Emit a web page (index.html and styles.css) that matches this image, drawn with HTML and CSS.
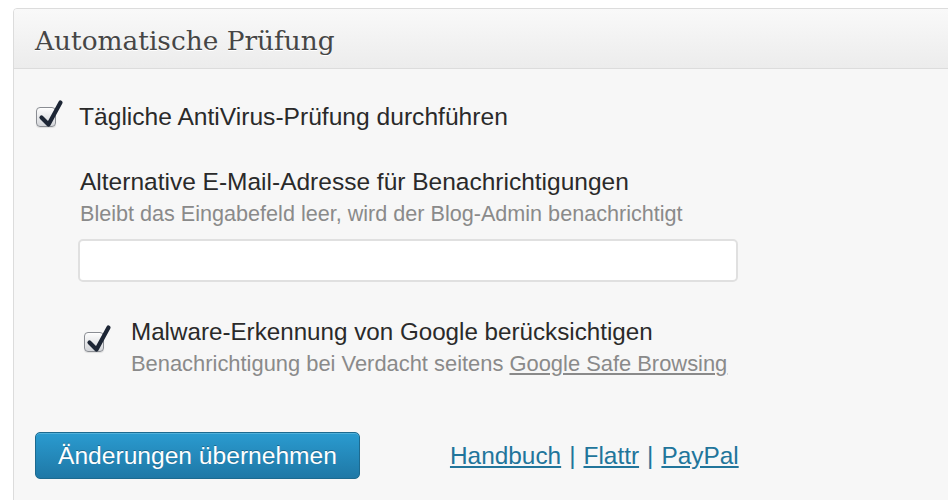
FILE: index.html
```html
<!DOCTYPE html>
<html lang="de">
<head>
<meta charset="utf-8">
<title>Automatische Prüfung</title>
<link rel="stylesheet" href="styles.css">
</head>
<body>
<div class="postbox">
  <h3 class="hndle">Automatische Prüfung</h3>
  <div class="inside">
    <label class="check-row">
      <span class="cbox"><svg viewBox="0 0 28 30" width="28" height="30"><path d="M4.5 18.5 L11.5 25.5 L23.5 3.5" fill="none" stroke="#1d2635" stroke-width="4.2" stroke-linecap="round" stroke-linejoin="round"/></svg></span>
      <span class="check-title">Tägliche AntiVirus-Prüfung durchführen</span>
    </label>

    <div class="sub">
      <div class="field-label">Alternative E-Mail-Adresse für Benachrichtigungen</div>
      <div class="hint">Bleibt das Eingabefeld leer, wird der Blog-Admin benachrichtigt</div>
      <input class="text-input" type="text">

      <label class="check-row nested">
        <span class="cbox"><svg viewBox="0 0 28 30" width="28" height="30"><path d="M4.5 18.5 L11.5 25.5 L23.5 3.5" fill="none" stroke="#1d2635" stroke-width="4.2" stroke-linecap="round" stroke-linejoin="round"/></svg></span>
        <span class="check-text">
          <span class="check-title">Malware-Erkennung von Google berücksichtigen</span>
          <span class="hint">Benachrichtigung bei Verdacht seitens <a href="#" class="hint-link">Google Safe Browsing</a></span>
        </span>
      </label>
    </div>

    <div class="actions">
      <button class="button-primary" type="button">Änderungen übernehmen</button>
      <div class="links">
        <a href="#">Handbuch</a><span class="sep">|</span><a href="#">Flattr</a><span class="sep">|</span><a href="#">PayPal</a>
      </div>
    </div>
  </div>
</div>
</body>
</html>
```

FILE: styles.css
```css
html, body {
  margin: 0;
  padding: 0;
  background: #ffffff;
  overflow: hidden;
}

body {
  font-family: "Liberation Sans", Arial, sans-serif;
  color: #333333;
}

.postbox {
  margin: 8px -12px 0 13px;
  border: 1px solid #dcdcdc;
  border-radius: 4px 4px 0 0;
  background: #f7f7f7;
  height: 600px;
}

.hndle {
  margin: 0;
  height: 60px;
  box-sizing: border-box;
  padding: 17px 0 0 21px;
  font-family: "DejaVu Serif", Georgia, serif;
  font-weight: normal;
  font-size: 26.4px;
  line-height: 30px;
  color: #464646;
  text-shadow: 0 1px 0 #ffffff;
  background: linear-gradient(to bottom, #f9f9f9, #ececec);
  border-bottom: 1px solid #dcdcdc;
  box-shadow: 0 1px 0 #ffffff;
  border-radius: 3px 3px 0 0;
}

.inside {
  padding: 34px 0 0 22px;
  background: #f7f7f7;
}

.check-row {
  display: flex;
  align-items: flex-start;
}

.cbox {
  position: relative;
  flex: none;
  width: 18px;
  height: 18px;
  margin: 4px 23px 0 0;
  border: 1px solid #8a8d93;
  border-radius: 4px;
  background: linear-gradient(to bottom, #fdfdfd, #d3d5d9);
  box-shadow: inset 0 1px 1px rgba(255,255,255,0.8), 0 1px 1px rgba(0,0,0,0.1);
}

.cbox svg {
  position: absolute;
  left: 0;
  top: -9px;
  overflow: visible;
}

.check-title {
  font-size: 24.6px;
  line-height: 28px;
  color: #2a2a2a;
}

.sub {
  margin-left: 44px;
  margin-top: 37px;
}

.field-label {
  font-size: 24.5px;
  line-height: 28px;
  color: #2a2a2a;
}

.hint {
  display: block;
  margin-top: 6px;
  font-size: 21.6px;
  line-height: 24px;
  color: #8a8a8a;
}

.hint-link {
  color: #8a8a8a;
}

.nested .hint {
  font-size: 21.9px;
}

.text-input {
  display: block;
  margin-top: 13px;
  margin-left: -2px;
  width: 660px;
  height: 43px;
  box-sizing: border-box;
  border: 2px solid #e0e0e0;
  border-radius: 5px;
  background: #ffffff;
  font-size: 18px;
  outline: none;
}

.nested {
  margin-top: 36px;
}

.nested .cbox {
  margin: 14px 27px 0 4px;
}

.nested .check-title {
  font-size: 24.2px;
}

.check-text {
  display: flex;
  flex-direction: column;
}

.actions {
  display: flex;
  align-items: center;
  margin-top: 56px;
  margin-left: -1px;
}

.button-primary {
  height: 47px;
  padding: 0 22px;
  border: 1px solid #1d6a8f;
  border-radius: 5px;
  background: linear-gradient(to bottom, #2a9bd0, #1f78a6);
  box-shadow: inset 0 1px 0 rgba(120,200,230,0.5);
  color: #ffffff;
  font-family: "Liberation Sans", Arial, sans-serif;
  font-size: 24.6px;
  text-shadow: 0 -1px 0 rgba(0,0,0,0.3);
  cursor: pointer;
}

.links {
  margin-left: 90px;
  font-size: 24.4px;
  line-height: 28px;
  color: #21759b;
}

.links a {
  color: #21759b;
}

.sep {
  margin: 0 8px;
  color: #21759b;
}
```
